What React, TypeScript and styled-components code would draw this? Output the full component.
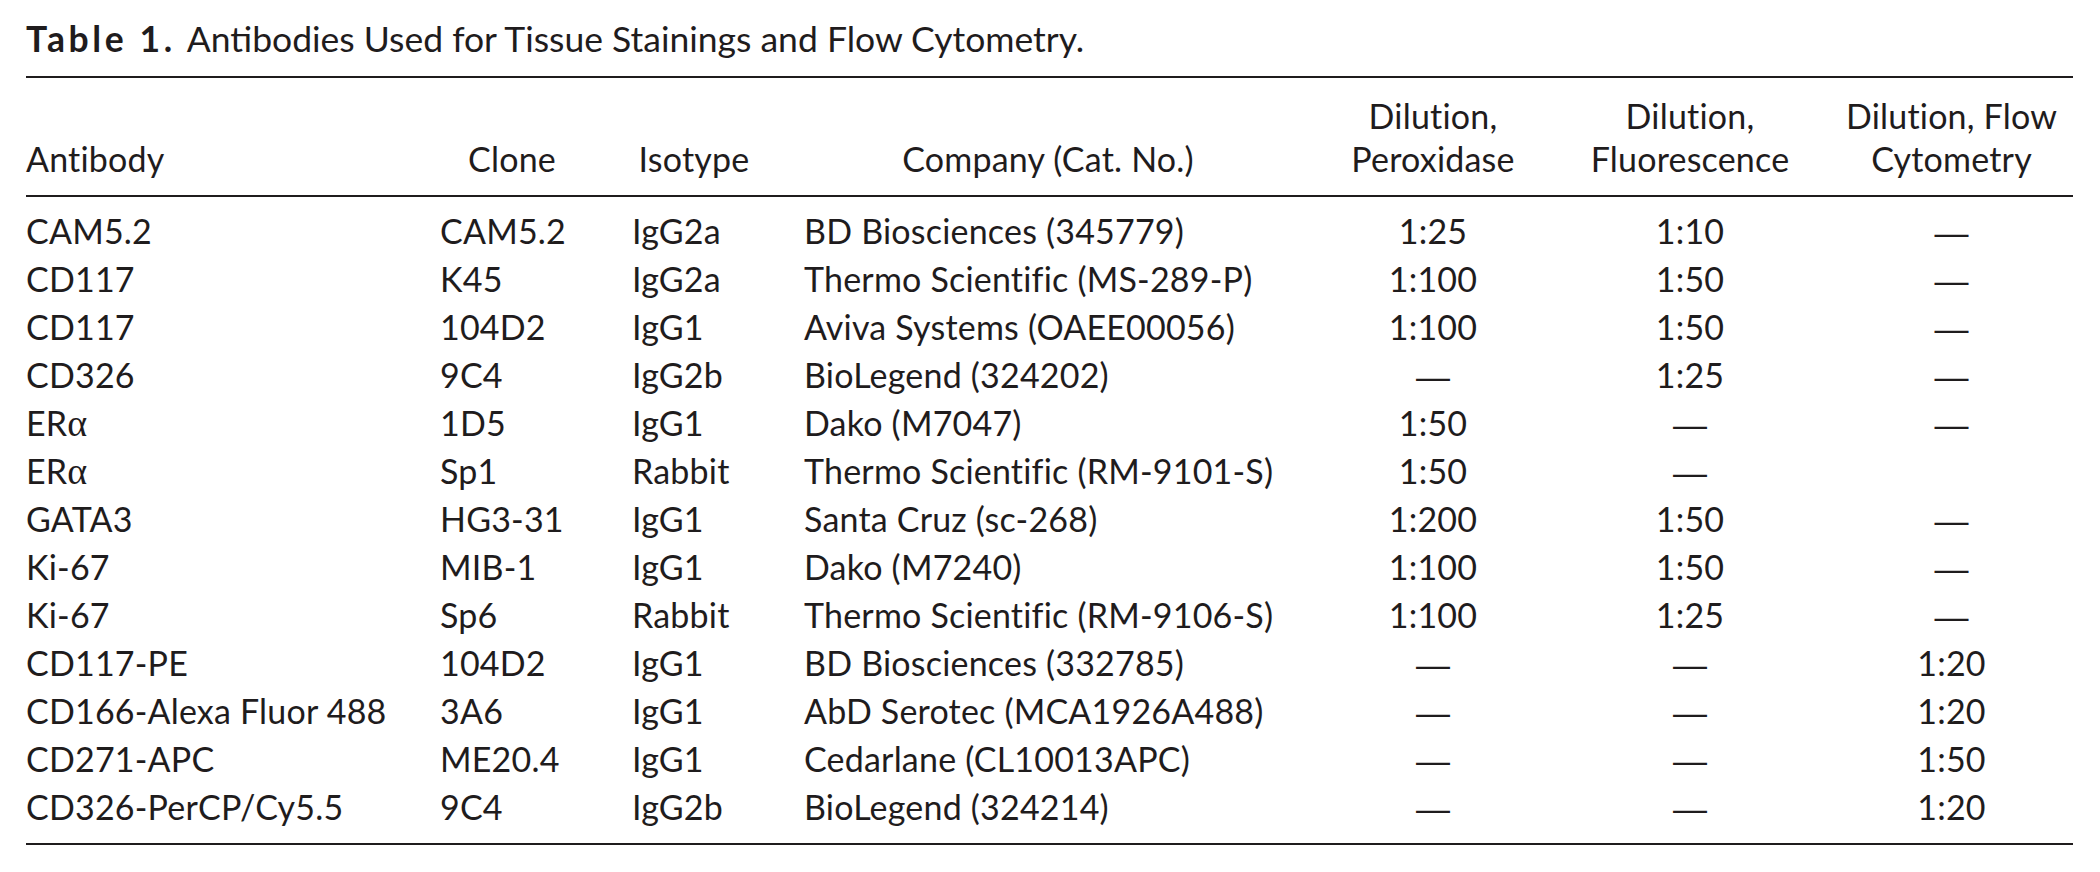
import React, {FC} from "react";
import styled, {createGlobalStyle} from "styled-components";

const INK = '#1f1c1d';
const FONT = 'Lato, "Open Sans", sans-serif';

const GlobalStyle = createGlobalStyle`
  body {
    margin: 0;
    background: #fff;
    color: ${INK};
    font-family: ${FONT};
  }
`;

const Page = styled.div`
  padding: 18px 27px 0 26px;
  width: 2047px;
`;

const Caption = styled.div`
  font-size: 35.5px;
  line-height: 42px;
  margin-bottom: 16px;
  white-space: nowrap;
`;

const Label = styled.span`
  font-weight: 700;
  letter-spacing: 3.6px;
  margin-right: 11px;
`;

const Table = styled.table`
  width: 2047px;
  border-collapse: collapse;
  table-layout: fixed;
  border-top: 2px solid ${INK};
  border-bottom: 2px solid ${INK};
  font-size: 34px;
  letter-spacing: 0.2px;
`;

const HeadRow = styled.tr`
  border-bottom: 2px solid ${INK};
`;

const Th = styled.th<{first?: boolean}>`
  font-weight: 400;
  line-height: 43px;
  text-align: ${p => (p.first ? 'left' : 'center')};
  vertical-align: bottom;
  padding: 16px 0 15px;
  white-space: nowrap;
`;

const Td = styled.td<{align?: 'left' | 'center'; first?: boolean; edge?: 'top' | 'bottom'}>`
  height: 48px;
  line-height: 48px;
  padding: ${p => (p.edge === 'top' ? '10px' : '0')} 0 ${p => (p.edge === 'bottom' ? '12px' : '0')}
    ${p => (p.align === 'center' || p.first ? '0' : '24px')};
  text-align: ${p => p.align || 'left'};
  white-space: nowrap;
`;

const Greek = styled.span`
  font-family: "Liberation Serif", "DejaVu Serif", serif;
  font-size: 38px;
  line-height: 0;
`;

const Dash = styled.span`
  font-family: "Liberation Sans", Arial, sans-serif;
  font-size: 34px;
  line-height: 0;
`;

const widths = [390, 192, 172, 536, 234, 280, 243];

type Row = [React.ReactNode, string, string, string, string, string, string];

const ER = <>ER<Greek>α</Greek></>;

const rows: Row[] = [
  ['CAM5.2', 'CAM5.2', 'IgG2a', 'BD Biosciences (345779)', '1:25', '1:10', '—'],
  ['CD117', 'K45', 'IgG2a', 'Thermo Scientific (MS-289-P)', '1:100', '1:50', '—'],
  ['CD117', '104D2', 'IgG1', 'Aviva Systems (OAEE00056)', '1:100', '1:50', '—'],
  ['CD326', '9C4', 'IgG2b', 'BioLegend (324202)', '—', '1:25', '—'],
  [ER, '1D5', 'IgG1', 'Dako (M7047)', '1:50', '—', '—'],
  [ER, 'Sp1', 'Rabbit', 'Thermo Scientific (RM-9101-S)', '1:50', '—', ''],
  ['GATA3', 'HG3-31', 'IgG1', 'Santa Cruz (sc-268)', '1:200', '1:50', '—'],
  ['Ki-67', 'MIB-1', 'IgG1', 'Dako (M7240)', '1:100', '1:50', '—'],
  ['Ki-67', 'Sp6', 'Rabbit', 'Thermo Scientific (RM-9106-S)', '1:100', '1:25', '—'],
  ['CD117-PE', '104D2', 'IgG1', 'BD Biosciences (332785)', '—', '—', '1:20'],
  ['CD166-Alexa Fluor 488', '3A6', 'IgG1', 'AbD Serotec (MCA1926A488)', '—', '—', '1:20'],
  ['CD271-APC', 'ME20.4', 'IgG1', 'Cedarlane (CL10013APC)', '—', '—', '1:50'],
  ['CD326-PerCP/Cy5.5', '9C4', 'IgG2b', 'BioLegend (324214)', '—', '—', '1:20'],
];

const dilution = (v: string) => (v === '—' ? <Dash>—</Dash> : v);

const App: FC = () => (
  <Page>
    <GlobalStyle/>
    <Caption>
      <Label>Table 1.</Label>Antibodies Used for Tissue Stainings and Flow Cytometry.
    </Caption>
    <Table>
      <colgroup>
        {widths.map((w, i) => <col key={i} style={{width: w}}/>)}
      </colgroup>
      <thead>
        <HeadRow>
          <Th first>Antibody</Th>
          <Th>Clone</Th>
          <Th>Isotype</Th>
          <Th>Company (Cat. No.)</Th>
          <Th>Dilution,<br/>Peroxidase</Th>
          <Th>Dilution,<br/>Fluorescence</Th>
          <Th>Dilution, Flow<br/>Cytometry</Th>
        </HeadRow>
      </thead>
      <tbody>
        {rows.map((r, i) => {
          const edge = i === 0 ? 'top' : i === rows.length - 1 ? 'bottom' : undefined;
          return (
            <tr key={i}>
              <Td first edge={edge}>{r[0]}</Td>
              <Td edge={edge}>{r[1]}</Td>
              <Td edge={edge}>{r[2]}</Td>
              <Td edge={edge}>{r[3]}</Td>
              <Td align="center" edge={edge}>{dilution(r[4])}</Td>
              <Td align="center" edge={edge}>{dilution(r[5])}</Td>
              <Td align="center" edge={edge}>{dilution(r[6])}</Td>
            </tr>
          );
        })}
      </tbody>
    </Table>
  </Page>
);

export default App;
